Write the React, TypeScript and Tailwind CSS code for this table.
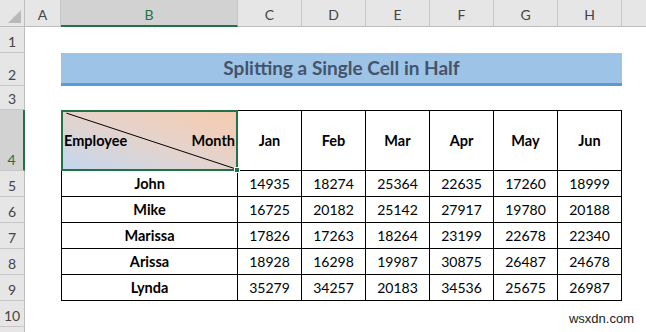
const months = ["Jan", "Feb", "Mar", "Apr", "May", "Jun"];
const cols = ["C", "D", "E", "F", "G", "H"];

const rows: { name: string; values: number[] }[] = [
  { name: "John", values: [14935, 18274, 25364, 22635, 17260, 18999] },
  { name: "Mike", values: [16725, 20182, 25142, 27917, 19780, 20188] },
  { name: "Marissa", values: [17826, 17263, 18264, 23199, 22678, 22340] },
  { name: "Arissa", values: [18928, 16298, 19987, 30875, 26487, 24678] },
  { name: "Lynda", values: [35279, 34257, 20183, 34536, 25675, 26987] },
];

function RowHead({ n, selected }: { n: number; selected?: boolean }) {
  return (
    <div
      className={
        selected
          ? "flex items-end justify-center pb-0 bg-[#d2d2d2] border-r-2 border-r-[#217346] border-b border-b-[#c6c6c6] text-[#217346] text-[14px]"
          : "flex items-end justify-center pb-0 bg-[#e6e6e6] border-r border-r-[#bdbdbd] border-b border-b-[#c6c6c6] text-[#444] text-[14px]"
      }
    >
      {n}
    </div>
  );
}

export default function App() {
  return (
    <div
      className="relative w-[646px] h-[332px] overflow-hidden bg-white"
      style={{ fontFamily: "Lato, 'Open Sans', sans-serif" }}
    >
      <div className="grid grid-cols-[25px_36px_177px_repeat(6,64px)_24px] grid-rows-[27px_26px_33px_24px_61px_26px_26px_26px_26px_26px_26px_5px]">
        {/* column headers */}
        <div className="relative bg-[#e6e6e6] border-r border-r-[#bdbdbd] border-b border-b-[#bdbdbd]">
          <div className="absolute right-[3px] bottom-[3px] w-0 h-0 border-l-[13px] border-l-transparent border-b-[13px] border-b-[#b9b9b9]" />
        </div>
        <div className="flex items-center justify-center pt-[3px] bg-[#e6e6e6] border-r border-r-[#c6c6c6] border-b border-b-[#bdbdbd] text-[14px] text-[#444]">
          A
        </div>
        <div className="flex items-center justify-center pt-[3px] bg-[#d2d2d2] border-r border-r-[#c6c6c6] border-b-2 border-b-[#217346] text-[14px] text-[#217346]">
          B
        </div>
        {cols.map((c) => (
          <div
            key={c}
            className="flex items-center justify-center pt-[3px] bg-[#e6e6e6] border-r border-r-[#c6c6c6] border-b border-b-[#bdbdbd] text-[14px] text-[#444]"
          >
            {c}
          </div>
        ))}
        <div className="bg-[#e6e6e6] border-b border-b-[#bdbdbd]" />

        {/* row 1 */}
        <RowHead n={1} />
        <div className="col-span-9" />

        {/* row 2 : title */}
        <RowHead n={2} />
        <div />
        <div className="col-span-7 flex items-center justify-center pt-[1px] bg-[#9dc3e6] border-b-[3px] border-b-[#5b9bd5] text-[19px] font-bold text-[#44546a]">
          Splitting a Single Cell in Half
        </div>
        <div />

        {/* row 3 */}
        <RowHead n={3} />
        <div className="col-span-9" />

        {/* row 4 : header */}
        <RowHead n={4} selected />
        <div />
        <div className="relative flex items-center justify-between px-[1px] border-2 border-[#217346] bg-linear-to-tr from-[#c3d7ee] via-[#e4d3cc] to-[#f6cbae] text-[14.5px] font-bold text-black">
          <svg className="absolute inset-0 w-full h-full" viewBox="0 0 100 100" preserveAspectRatio="none">
            <line x1="2" y1="2" x2="100" y2="100" stroke="#000" strokeWidth="1" vectorEffect="non-scaling-stroke" />
          </svg>
          <span className="relative">Employee</span>
          <span className="relative">Month</span>
          <div className="absolute -right-[4px] -bottom-[4px] w-[6px] h-[6px] bg-[#217346] border border-white" />
        </div>
        {months.map((m) => (
          <div
            key={m}
            className="flex items-center justify-center border-t border-r border-b border-black text-[14.5px] font-bold text-black"
          >
            {m}
          </div>
        ))}
        <div />

        {/* data rows */}
        {rows.map((r, i) => (
          <div key={r.name} className="contents">
            <RowHead n={i + 5} />
            <div />
            <div className="flex items-center justify-center border-l border-r border-b border-black text-[14.5px] font-bold text-black">
              {r.name}
            </div>
            {r.values.map((v, j) => (
              <div
                key={j}
                className="flex items-center justify-center border-r border-b border-black text-[14px] text-black"
              >
                {v}
              </div>
            ))}
            <div />
          </div>
        ))}

        {/* row 10 */}
        <RowHead n={10} />
        <div className="col-span-9" />
        <div className="bg-[#e6e6e6] border-r border-r-[#bdbdbd]" />
        <div className="col-span-9" />
      </div>

      <div
        className="absolute right-[12px] bottom-[4px] text-[13px] text-[#222]"
        style={{ fontFamily: "'Liberation Sans', Arial, sans-serif" }}
      >
        wsxdn.com
      </div>
    </div>
  );
}
